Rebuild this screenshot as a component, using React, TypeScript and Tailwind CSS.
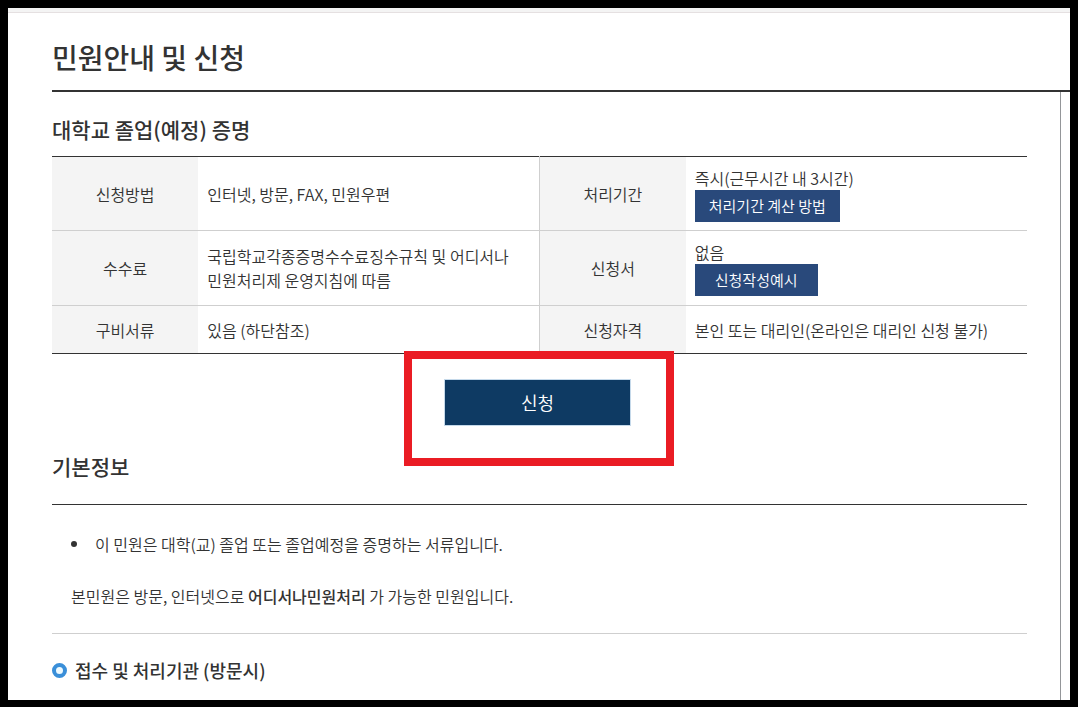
import type { ReactNode } from "react";

function LabelCell({
  children,
  divided,
}: {
  children: ReactNode;
  divided?: boolean;
}) {
  return (
    <th
      scope="row"
      className={
        divided
          ? "w-[15%] border-l border-[#cfcfcf] bg-[#f4f4f4] text-center font-[350]"
          : "w-[15%] bg-[#f4f4f4] text-center font-[350]"
      }
    >
      {children}
    </th>
  );
}

function ValueCell({ children }: { children: ReactNode }) {
  return <td className="w-[35%] px-[9px]">{children}</td>;
}

function SmallButton({
  children,
  wide,
}: {
  children: ReactNode;
  wide?: boolean;
}) {
  return (
    <button
      type="button"
      className={
        wide
          ? "block h-8 bg-[#29497b] px-5 text-[15px] leading-6 font-[350] text-white"
          : "block h-8 bg-[#29497b] px-[14px] text-[15px] leading-6 font-[350] text-white"
      }
    >
      {children}
    </button>
  );
}

export default function App() {
  return (
    <div className="min-h-screen border-8 border-b-[7px] border-black bg-white font-['Noto_Sans_CJK_KR',sans-serif] text-base leading-6 font-[350] break-keep text-[#333]">
      <div className="h-[5px] border-b border-[#e5e0e1] bg-[#f4f4f4]" />
      <main className="pl-11">
        <header className="border-b-2 border-[#333] pt-6 pb-[13px]">
          <h1 className="text-[28px] leading-10 font-medium">
            민원안내 및 신청
          </h1>
        </header>

        <div className="mr-[9px] border-r border-[#949699] pr-[33px]">
          <section className="pt-[22px]">
            <h2 className="pb-3 text-[21px] leading-[30px] font-medium">
              대학교 졸업(예정) 증명
            </h2>
            <table className="w-full table-fixed border-collapse border-y border-[#333]">
              <tbody>
                <tr className="h-[74px] border-b border-[#cfcfcf]">
                  <LabelCell>신청방법</LabelCell>
                  <ValueCell>인터넷, 방문, FAX, 민원우편</ValueCell>
                  <LabelCell divided>처리기간</LabelCell>
                  <ValueCell>
                    <p>즉시(근무시간 내 3시간)</p>
                    <SmallButton>처리기간 계산 방법</SmallButton>
                  </ValueCell>
                </tr>
                <tr className="h-[75px] border-b border-[#cfcfcf]">
                  <LabelCell>수수료</LabelCell>
                  <ValueCell>
                    국립학교각종증명수수료징수규칙 및 어디서나
                    민원처리제 운영지침에 따름
                  </ValueCell>
                  <LabelCell divided>신청서</LabelCell>
                  <ValueCell>
                    <p>없음</p>
                    <SmallButton wide>신청작성예시</SmallButton>
                  </ValueCell>
                </tr>
                <tr className="h-12">
                  <LabelCell>구비서류</LabelCell>
                  <ValueCell>있음 (하단참조)</ValueCell>
                  <LabelCell divided>신청자격</LabelCell>
                  <ValueCell>
                    본인 또는 대리인(온라인은 대리인 신청 불가)
                  </ValueCell>
                </tr>
              </tbody>
            </table>
          </section>

          <div className="flex justify-center pt-[25px] pr-1">
            <div className="relative">
              <button
                type="button"
                className="block h-[47px] w-[187px] border border-[#c5d9ea] bg-[#0e3a63] pb-[2px] text-lg font-[350] text-white"
              >
                신청
              </button>
              {/* highlight frame around the apply button */}
              <div className="pointer-events-none absolute -top-7 -right-[43px] -bottom-10 -left-10 border-8 border-[#ea1c24]" />
            </div>
          </div>

          <section className="border-b border-[#cfcfcf] pt-[25px]">
            <h2 className="border-b border-[#333] pb-[23px] text-[21px] leading-[30px] font-medium">
              기본정보
            </h2>
            <div className="px-[19px] pt-[27px] pb-[25px]">
              <ul>
                <li className="flex items-center gap-[18px]">
                  <span className="size-[6px] rounded-full bg-[#333]" />
                  이 민원은 대학(교) 졸업 또는 졸업예정을 증명하는 서류입니다.
                </li>
              </ul>
              <p className="pt-7">
                본민원은 방문, 인터넷으로{" "}
                <strong className="font-medium">어디서나민원처리</strong> 가
                가능한 민원입니다.
              </p>
            </div>
          </section>

          <section className="pt-[22px] pb-4">
            <h3 className="flex items-center gap-2 text-lg leading-7 font-medium">
              <span className="size-[15px] rounded-full border-4 border-[#3a8fd9] bg-[#eefaff]" />
              접수 및 처리기관 (방문시)
            </h3>
          </section>
        </div>
      </main>
    </div>
  );
}
